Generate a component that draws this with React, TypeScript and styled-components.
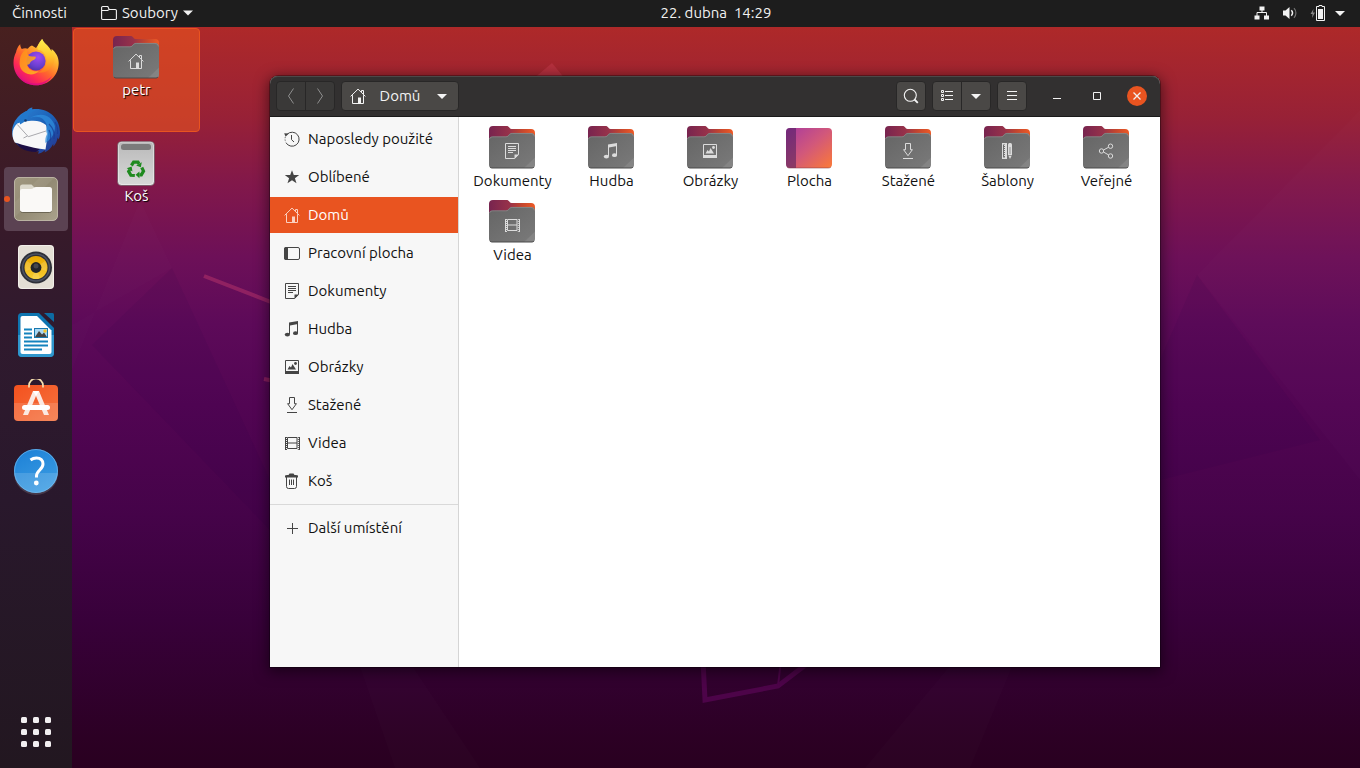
import React from "react";
import styled, { createGlobalStyle, css } from "styled-components";

const GlobalStyle = createGlobalStyle`
  *, *::before, *::after { box-sizing: border-box; }
  html, body { margin: 0; height: 100%; }
  body {
    font-family: Ubuntu, "Noto Sans", "Open Sans", sans-serif;
    font-size: 15px;
    line-height: 18px;
    color: #111;
    background: #2c0022;
  }
  button {
    font: inherit;
    color: inherit;
    border: 0;
    padding: 0;
    background: none;
    cursor: default;
  }
  svg { display: block; flex: none; }
`;

/* ---------- symbolic icons, 16 x 16 ---------- */

type SymbolName =
  | "recent" | "star" | "home" | "desktop" | "document" | "music" | "picture"
  | "download" | "video" | "trash" | "plus" | "template" | "share" | "folder"
  | "back" | "forward" | "caret" | "search" | "list" | "menu" | "minimize"
  | "maximize" | "close" | "network" | "volume" | "battery";

const symbols: Record<SymbolName, React.ReactNode> = {
  recent: (
    <g fill="none" stroke="currentColor">
      <path d="M3.2 3.2A7 7 0 1 1 2.2 12" />
      <path d="M1.3 6.2A7 7 0 0 0 1.9 11.4" strokeDasharray="1 1.4" />
      <path d="M7.5 4v4.6L10 11" />
      <path d="M0.2 2.2 4.8 2.4 1.6 5.8z" fill="currentColor" stroke="none" />
    </g>
  ),
  star: <path d="M8 1.2 9.8 6h5.4l-4.3 3.2 1.6 5L8 11.2l-4.5 3 1.6-5L.8 6h5.4z" fill="currentColor" />,
  home: (
    <>
      <path d="M.6 8.4 8 1.1l7.4 7.3M2.5 7.2v8.3h5.8M13.5 7.2v8.3h-3M11.5 4V2.5h2V6" fill="none" stroke="currentColor" />
      <path d="M8 9.5h3V16H8z" fill="currentColor" />
    </>
  ),
  desktop: (
    <>
      <rect x=".5" y="2.5" width="15" height="12" rx="1.5" fill="none" stroke="currentColor" />
      <path d="M0 4a2 2 0 0 1 2-2h2v13H2a2 2 0 0 1-2-2z" fill="currentColor" />
    </>
  ),
  document: (
    <>
      <path d="M1.5.5h13v11l-4 4h-9z" fill="none" stroke="currentColor" />
      <path d="M4 3.500h8M4 5.500h8M4 7.500h8M4 9.500h5" stroke="currentColor" />
      <path d="M15 11.500 10.500 16v-4.500z" fill="currentColor" />
    </>
  ),
  music: (
    <>
      <path d="M5 1.600 14 0v3L6 4.400V13H5z" fill="currentColor" />
      <path d="M13 1h1v11h-1z" fill="currentColor" />
      <ellipse cx="3.400" cy="13.600" rx="2.600" ry="1.900" fill="currentColor" />
      <ellipse cx="11.500" cy="12.200" rx="2.500" ry="1.900" fill="currentColor" />
    </>
  ),
  picture: (
    <>
      <path d="M1.500 1.500h13v12h-13z" fill="none" stroke="currentColor" />
      <path d="M1 12h14v3H1zM3.500 10.500 5.500 7 7 8.500 8.500 5l3.500 5.500z" fill="currentColor" />
      <circle cx="11.500" cy="4.500" r="1.400" fill="currentColor" />
    </>
  ),
  download: (
    <path d="M5.500.5h5v6.200h1.900L8 12.700 3.600 6.700h1.900zM3 15.500h10" fill="none" stroke="currentColor" />
  ),
  video: (
    <>
      <path d="M3.500 2.500h9.500v11H3.500zM3.500 8H13" fill="none" stroke="currentColor" />
      <path d="M1.500 2v13M15.500 2v13" stroke="currentColor" />
      <path d="M2.500 2v13M14.300 2v13" stroke="currentColor" strokeDasharray="1 1" />
    </>
  ),
  trash: (
    <>
      <path d="M2.500 4v9.500a2 2 0 0 0 2 2h6a2 2 0 0 0 2-2V4M5.500 6.500V12M7.500 6.500V12M9.500 6.500V12" fill="none" stroke="currentColor" />
      <path d="M1 2.500 3 2h1.500L5.500.5h4L10.500 2H12l2 .5V4.500H1z" fill="currentColor" />
    </>
  ),
  plus: <path d="M8.500 3v11M3 8.500h11" stroke="currentColor" />,
  template: (
    <>
      <path d="M3 0h5v16H3zm1 1.500v13h2v-13z" fill="currentColor" fillRule="evenodd" />
      <path d="M5 2.500h2M5 4.500h2M5 6.500h2M5 8.500h2M5 10.500h2M5 12.500h2" stroke="currentColor" />
      <path d="M9 1.500A1.500 1.500 0 0 1 10.500 0h1A1.500 1.500 0 0 1 13 1.500V12l-2 4-2-4z" fill="currentColor" />
      <path d="M11 4v7M9 12.500h4" stroke="#777" strokeWidth=".7" />
    </>
  ),
  share: (
    <g fill="none" stroke="currentColor">
      <circle cx="3.500" cy="8" r="2.200" />
      <circle cx="12.500" cy="3.200" r="2.200" />
      <circle cx="12.500" cy="13" r="2.200" />
      <path d="M5.500 7 10.500 4.300M5.500 9l5 2.900" />
    </g>
  ),
  folder: (
    <path d="M.6 4.700V2.600a1.100 1.100 0 0 1 1.100-1.100h5.100L8.200 4.500h6.100a1.100 1.100 0 0 1 1.100 1.100v7.800a1.100 1.100 0 0 1-1.100 1.100H1.700a1.100 1.100 0 0 1-1.100-1.100V4.700M1 5.500h5.600l1.600-1" fill="none" stroke="currentColor" strokeWidth="1.100" />
  ),
  back: <path d="M10.500.5 5.500 8l5 7.500" fill="none" stroke="currentColor" />,
  forward: <path d="M5.500.5l5 7.500-5 7.500" fill="none" stroke="currentColor" />,
  caret: <path d="M3 6h10l-5 5z" fill="currentColor" />,
  search: (
    <>
      <circle cx="7.300" cy="7.300" r="6" fill="none" stroke="currentColor" strokeWidth="1.100" />
      <path d="m11.500 11.500 3.300 3.300" stroke="currentColor" strokeWidth="1.800" />
    </>
  ),
  list: (
    <>
      <path d="M2.500 2.500h2v2h-2zM2.500 6.500h2v2h-2zM2.500 10.500h2v2h-2z" fill="none" stroke="currentColor" />
      <path d="M6 3.500h8M6 7.500h8M6 11.500h8" stroke="currentColor" />
    </>
  ),
  menu: <path d="M3 3.500h10M3 7.500h10M3 11.500h10" stroke="currentColor" />,
  minimize: <path d="M4 10.500h8" stroke="currentColor" />,
  maximize: <path d="M4.500 4.500h7v7h-7z" fill="none" stroke="currentColor" />,
  close: <path d="m4.500 4.500 7 7m0-7-7 7" stroke="currentColor" strokeWidth="1.300" />,
  network: (
    <>
      <path d="M5.500 1.500h5v4h-5zM.5 10.500h5v4h-5zM10 10.500h5v4h-5z" fill="currentColor" />
      <path d="M8 5v3M3 11V7.500h9.500V11" fill="none" stroke="currentColor" />
    </>
  ),
  volume: (
    <>
      <path d="M1 5.500h2.500L7.500 2v12l-4-3.500H1z" fill="currentColor" />
      <path d="M9.300 5.300a4 4 0 0 1 0 5.400" fill="none" stroke="currentColor" strokeWidth="1.500" />
      <path d="M12 3.200a7 7 0 0 1 0 9.600" fill="none" stroke="currentColor" opacity=".4" strokeWidth="1.200" />
    </>
  ),
  battery: (
    <>
      <path d="M3.500 4 .5 9h2L2 13l3-5.500H3z" fill="currentColor" opacity=".5" />
      <path d="M9 .5h3v1h2.500v14H6.500v-14H9z" fill="none" stroke="currentColor" />
      <path d="M8 4h5v10H8z" fill="currentColor" />
    </>
  ),
};

const Symbol = ({ name }: { name: SymbolName }) => (
  <svg width="16" height="16" viewBox="0 0 16 16" aria-hidden="true">
    {symbols[name]}
  </svg>
);

/* ---------- full colour icons ---------- */

const Defs = styled.svg`
  position: absolute;
  width: 0;
  height: 0;
`;

const Gradients = () => (
  <Defs aria-hidden="true">
    <defs>
      <linearGradient id="folderBack" x1="0" y1="0" x2="1" y2="0">
        <stop offset="0" stopColor="#77244f" />
        <stop offset=".45" stopColor="#98324a" />
        <stop offset=".7" stopColor="#c2452f" />
        <stop offset="1" stopColor="#ee5a25" />
      </linearGradient>
      <linearGradient id="folderFront" x1="0" y1="0" x2="1" y2="1">
        <stop offset="0" stopColor="#656565" />
        <stop offset="1" stopColor="#7a7a7a" />
      </linearGradient>
      <linearGradient id="desktopIcon" x1="0" y1="0" x2="1" y2="1">
        <stop offset="0" stopColor="#a83aa0" />
        <stop offset=".5" stopColor="#d2587a" />
        <stop offset="1" stopColor="#fb7a37" />
      </linearGradient>
      <linearGradient id="binBody" x1="0" y1="0" x2="0" y2="1">
        <stop offset="0" stopColor="#b9b9b9" />
        <stop offset="1" stopColor="#d8d8d8" />
      </linearGradient>
      <linearGradient id="foxBody" x1=".9" y1=".1" x2=".25" y2=".95">
        <stop offset="0" stopColor="#fff44f" />
        <stop offset=".3" stopColor="#ffb02e" />
        <stop offset=".55" stopColor="#ff6a2c" />
        <stop offset=".8" stopColor="#ff2a55" />
        <stop offset="1" stopColor="#e0107e" />
      </linearGradient>
      <linearGradient id="foxFlame" x1=".5" y1="0" x2=".5" y2="1">
        <stop offset="0" stopColor="#fff44f" />
        <stop offset=".5" stopColor="#ffc92c" />
        <stop offset="1" stopColor="#ff7a1f" />
      </linearGradient>
      <linearGradient id="foxHead" x1="0" y1="0" x2="1" y2="1">
        <stop offset="0" stopColor="#ff8a1c" />
        <stop offset="1" stopColor="#ffb520" />
      </linearGradient>
      <radialGradient id="foxGlobe" cx=".6" cy=".3" r=".8">
        <stop offset="0" stopColor="#a04af0" />
        <stop offset=".6" stopColor="#6a3fd0" />
        <stop offset="1" stopColor="#4a2fa0" />
      </radialGradient>
      <linearGradient id="birdBody" x1="0" y1="0" x2="1" y2="1">
        <stop offset="0" stopColor="#2f86d8" />
        <stop offset=".5" stopColor="#1c62b8" />
        <stop offset="1" stopColor="#25308a" />
      </linearGradient>
      <linearGradient id="filesApp" x1="0" y1="0" x2="1" y2="1">
        <stop offset="0" stopColor="#a09880" />
        <stop offset=".5" stopColor="#938b74" />
        <stop offset="1" stopColor="#aaa28c" />
      </linearGradient>
      <linearGradient id="speakerRing" x1="0" y1="0" x2="0" y2="1">
        <stop offset="0" stopColor="#e8a800" />
        <stop offset="1" stopColor="#f7cc30" />
      </linearGradient>
      <linearGradient id="storeBag" x1="0" y1="0" x2="1" y2="1">
        <stop offset="0" stopColor="#f4511e" />
        <stop offset="1" stopColor="#f47340" />
      </linearGradient>
      <linearGradient id="helpDisc" x1="0" y1="0" x2=".5" y2="1">
        <stop offset="0" stopColor="#1b7fd6" />
        <stop offset="1" stopColor="#3a9be2" />
      </linearGradient>
    </defs>
  </Defs>
);

const FolderIcon = ({ symbol }: { symbol: SymbolName }) => (
  <svg width="49" height="48" viewBox="0 0 49 48" color="#dcdcdc" aria-hidden="true">
    <path d="M1 6a4 4 0 0 1 4-4h13.500c1.500 0 2 .6 3 1.700C22.300 4.700 23 5 24.500 5H43a4 4 0 0 1 4 4v8H1z" fill="url(#folderBack)" />
    <path d="M1 16a3.500 3.500 0 0 1 3.500-3.500h13c2 0 2.600-.8 3.600-2 .8-1 1.600-1.500 3.400-1.500H43a4 4 0 0 1 4 4v28a3 3 0 0 1-3 3H4a3 3 0 0 1-3-3z" fill="url(#folderFront)" />
    <path d="M1.500 15a3 3 0 0 1 3-2.200h13c2 0 2.800-.8 3.800-2 .8-1 1.600-1.400 3.200-1.400H43a3.500 3.500 0 0 1 3.500 3" fill="none" stroke="#a2a2a2" strokeOpacity=".7" strokeWidth=".7" />
    <path d="M47 33.500V41a3 3 0 0 1-3 3h-8z" fill="#fff" opacity=".09" />
    <path d="M2 43c.5.7 1.200 1 2 1h40c.8 0 1.500-.3 2-1" fill="none" stroke="#4a4a4a" />
    <svg x="16" y="19" width="16" height="16" viewBox="0 0 16 16">{symbols[symbol]}</svg>
  </svg>
);

const DesktopFolderIcon = () => (
  <svg width="49" height="48" viewBox="0 0 49 48" aria-hidden="true">
    <rect x="1" y="4" width="46" height="40" rx="4" fill="url(#desktopIcon)" />
    <path d="M5 4h6v40H5a4 4 0 0 1-4-4V8a4 4 0 0 1 4-4z" fill="#3e1858" opacity=".5" />
    <path d="M2 43c.6.600 1.500 1 3 1h38c1.500 0 2.400-.4 3-1" fill="none" stroke="#7a3040" strokeOpacity=".5" />
  </svg>
);

const RecycleArm = ({ turn }: { turn: number }) => (
  <g transform={`rotate(${turn})`}>
    <path d="M-4.600-4-2.400-7.300H2l1 1.700" fill="none" stroke="#1f8a1f" strokeWidth="3.200" />
    <path d="M5.800-7.300 4.800-2.300.1-4z" fill="#1f8a1f" />
  </g>
);

const TrashBinIcon = () => (
  <svg width="49" height="48" viewBox="0 0 49 48" aria-hidden="true">
    <rect x="5.500" y="1.500" width="37" height="44" rx="4" fill="url(#binBody)" stroke="#5c4a52" strokeOpacity=".6" />
    <rect x="6.500" y="2" width="35" height="42.500" rx="3.500" fill="none" stroke="#fff" strokeOpacity=".4" />
    <rect x="9" y="4" width="30" height="6" rx="2.500" fill="#7b7b7b" />
    <g transform="translate(24 29.500)">
      <RecycleArm turn={0} />
      <RecycleArm turn={120} />
      <RecycleArm turn={240} />
    </g>
  </svg>
);

const FirefoxIcon = () => (
  <svg width="48" height="48" viewBox="0 0 48 48" aria-hidden="true">
    <path d="M1.500 24c0-4 .8-7.500 2.600-11 .3-2.300 1.600-5.500 4.100-7.800.1 2 .6 3.400 1.600 4.800 2-1 4.200-1 6-.3 1-1.400 2.500-2.600 4.200-3.200L24 9l6-9c1.500 3.500 5 5.500 7.500 9 .8 1.200 1.200 2.200 1.700 3.500.3-.8.400-1.500.4-2.500C44 13.500 46.700 18 46.700 24c0 12.500-10 22.300-22.600 22.300S1.500 36.500 1.500 24z" fill="url(#foxBody)" />
    <circle cx="24" cy="22" r="9.600" fill="url(#foxGlobe)" />
    <path d="M30.300 0c-3.500 3-5.200 7.500-4.800 10.500 5 .8 8.300 4.500 9 9.500.7 6-3.500 12.500-9.500 13.500 10 1.500 17-5 17.500-13.500C42.800 11 33 8 30.300 0z" fill="url(#foxFlame)" opacity=".85" />
    <path d="M15.800 9.700c-1.400 2.800-.6 5.800 1.200 7.300 2 .6 4 .4 6.800.7.400 2.400-2.500 3.200-4.500 4.500-1.500 1-1 3.500-4.300 3.500 1.500 5 6 7.300 12 6.300-3 3-7 4-11 3C9 33 6.500 27 8 20.500 8.300 16 11 11.500 15.800 9.700z" fill="url(#foxHead)" opacity=".9" />
    <path d="M4 33c4 8 12 12 20.500 11.500 6-.4 11.500-3 15.500-7.500-3.500 6-9 9.300-16 9.300C15 46.300 7 41 4 33z" fill="#d90a86" opacity=".75" />
  </svg>
);

const ThunderbirdIcon = () => (
  <svg width="48" height="48" viewBox="0 0 48 48" aria-hidden="true">
    <path d="M15 4c1-2 3.500-3.500 5.500-3.500L20 2.200C36 0 48 11 48 25c0 4-.7 6-1.500 7.500l-.8-2c-.7 4-2 6.500-4.200 9l-.3-2.500c-2 4-5 7-8.700 8.500l.8-2.500c-2.300 2-4.500 3.200-7.300 3.700l1-2.500C11 45 0 37 0 25 0 19 2.500 13 7.500 8.500 9.500 6.500 12 5 15 4z" fill="url(#birdBody)" />
    <path d="M2 31c3 9 10 14 22 14l4-3L8 32z" fill="#1c0e45" />
    <path d="M.5 27c0-4 1.700-8 4.700-10.500 4-1.700 8-2.500 11.800-2.500 7-1 13 .5 17 4l2 8-2.500 16.500C24 41.500 12 38.500 2.800 35.500 1.300 33 .5 30 .5 27z" fill="#f7f7f8" />
    <path d="m5.300 17.500 11 12.200 17.700-5.700M15.500 29l-4 2" fill="none" stroke="#a9a9ae" />
    <path d="M9 9c3-5 9-7.500 15-5.500-5 1-8 4-9 8.500-1.500 2-4 4-7 5.500C7.500 14 7.700 11.500 9 9z" fill="#2277cb" />
    <path d="M18 11c8-3 15 0 17 8-1 2-1.200 5 0 8-1.500 3-2 6-1.600 9 6-3.500 10-10 9.500-17C40 9 30 4 18 11z" fill="#2f8ddd" opacity=".75" />
    <path d="M37 17c4 4 6 9 5 15m-5-9c1.800 3 2.200 7 1 11M43 15c2.400 4 3 8 2.500 12" stroke="#173a94" strokeWidth="1.200" fill="none" opacity=".7" />
    <circle cx="13.500" cy="13.500" r="1.300" fill="#123a70" />
  </svg>
);

const FilesAppIcon = () => (
  <svg width="48" height="48" viewBox="0 0 48 48" aria-hidden="true">
    <rect x="2.500" y="2.500" width="43" height="43" rx="4.500" fill="url(#filesApp)" stroke="#cbc5b2" strokeOpacity=".8" />
    <path d="M3 27 27 3h15L3 42z" fill="#fff" opacity=".06" />
    <path d="M8 12a2.500 2.500 0 0 1 2.500-2.500h9L23 13h2v6H8z" fill="#dcd9cc" />
    <path d="M8 16a2 2 0 0 1 2-2h9c2 0 3-2 5-2h13.500a2.500 2.500 0 0 1 2.500 2.500v20a2.500 2.500 0 0 1-2.500 2.500h-27A2.500 2.500 0 0 1 8 34.500z" fill="#faf9f7" />
    <path d="M8.500 36.500c.5.800 1 1 2 1h27c1 0 1.500-.2 2-1" fill="none" stroke="#6c6654" />
  </svg>
);

const SpeakerIcon = () => (
  <svg width="48" height="48" viewBox="0 0 48 48" aria-hidden="true">
    <rect x="6" y="2" width="36" height="44" rx="4" fill="#e4dfd5" />
    <rect x="6.500" y="2.500" width="35" height="43" rx="3.500" fill="none" stroke="#fff" strokeOpacity=".5" />
    <circle cx="24" cy="24.500" r="16" fill="#2e3038" />
    <circle cx="24" cy="24.500" r="13.500" fill="none" stroke="#4d5363" strokeWidth="1.500" />
    <circle cx="24" cy="24.500" r="11.500" fill="url(#speakerRing)" />
    <path d="M24 24.500 15 18a11 11 0 0 0-1 10zM24 24.500l9-6.500a11 11 0 0 1 1 10zM24 24.500 20 35a11 11 0 0 0 8 0z" fill="#fff" opacity=".15" />
    <circle cx="24" cy="24.500" r="5.400" fill="#22242a" />
    <circle cx="24" cy="23" r="2.500" fill="#45474e" />
  </svg>
);

const WriterIcon = () => (
  <svg width="48" height="48" viewBox="0 0 48 48" aria-hidden="true">
    <path d="M9.500 2H27l15 15v25a4 4 0 0 1-4 4H10a4 4 0 0 1-4-4V5.500A3.500 3.500 0 0 1 9.500 2z" fill="#0e75b0" />
    <path d="M6 24h36v18a4 4 0 0 1-4 4H10a4 4 0 0 1-4-4z" fill="#2f97cd" />
    <path d="M10.500 5H25l14.500 14.500v21.500a2 2 0 0 1-2 2h-27a2 2 0 0 1-2-2V7a2 2 0 0 1 2-2z" fill="#fff" />
    <path d="M32 2h8.500A1.500 1.500 0 0 1 42 3.500V11z" fill="#0d6ba2" />
    <path d="M12 18.500h8M12 22.500h8M12 26.500h8M12 30.500h24M12 34.500h24M12 38.500h18" stroke="#1483be" strokeWidth="1.800" />
    <path d="M22 17h14v10H22z" fill="#1878ae" />
    <path d="M23 18h12v8H23z" fill="#a9d8f3" />
    <path d="m23 26 4-6 3 3.500 2-2 3 4.500z" fill="#444" />
    <circle cx="33" cy="20" r="1.700" fill="#f5c52c" />
  </svg>
);

const StoreIcon = () => (
  <svg width="48" height="48" viewBox="0 0 48 48" aria-hidden="true">
    <rect x="2" y="6" width="44" height="36" rx="4" fill="url(#storeBag)" />
    <path d="M2 24h44v14a4 4 0 0 1-4 4H6a4 4 0 0 1-4-4z" fill="#fff" opacity=".14" />
    <path d="M17 8.500v-2a7 7 0 0 1 14 0v2" fill="none" stroke="#f6dfae" strokeWidth="1.700" />
    <path d="M21 12h6l10 24h-5l-8-19-8 19h-5z" fill="#fbe9e2" />
    <path d="M21 12h6l-3 5z" fill="#fff" />
    <rect x="10" y="26" width="28" height="5" rx="2.500" fill="#fff" />
  </svg>
);

const HelpIcon = () => (
  <svg width="48" height="48" viewBox="0 0 48 48" aria-hidden="true">
    <circle cx="24" cy="24" r="22" fill="url(#helpDisc)" />
    <path d="M2 26a22 22 0 0 0 44 0z" fill="#fff" opacity=".14" />
    <circle cx="24" cy="24" r="21.500" fill="none" stroke="#7dc0f0" strokeOpacity=".6" />
    <path d="M18.500 13c2-1.500 4-2 6-2 4.200 0 6.500 2.500 6.500 6 0 5.500-6.500 6.500-6.500 12v1.500" fill="none" stroke="#fff" strokeWidth="3" />
    <circle cx="24.300" cy="36" r="2.400" fill="#fff" />
  </svg>
);

const AppGridIcon = () => (
  <svg width="48" height="48" viewBox="0 0 48 48" fill="#f2eff1" aria-hidden="true">
    {[9, 21, 33].map((y) => [9, 21, 33].map((x) => <rect key={`${x}-${y}`} x={x} y={y} width="6" height="6" rx="1.500" />))}
  </svg>
);

/* ---------- shell ---------- */

const Screen = styled.div`
  display: grid;
  grid-template-rows: 27px 1fr;
  min-height: 100vh;
`;

const TopBar = styled.header`
  display: grid;
  grid-template-columns: 72px 1fr auto 1fr;
  align-items: center;
  padding-bottom: 1px;
  color: #f2f2f2;
  background: #1d1d1d;
`;

const BarButton = styled.button<{ $inset?: number }>`
  display: flex;
  align-items: center;
  gap: 5px;
  padding: 0 ${(p) => p.$inset ?? 0}px;
  white-space: pre;
`;

const Status = styled.button`
  display: flex;
  align-items: center;
  justify-self: end;
  gap: 12px;
  padding-right: 12px;
`;

const StatusTail = styled.span`
  display: flex;
  gap: 6px;
`;

const Body = styled.div`
  display: grid;
  grid-template-columns: 72px 1fr;
`;

const Dock = styled.nav`
  display: flex;
  flex-direction: column;
  align-items: center;
  gap: 4px;
  padding: 4px 0;
  background: linear-gradient(#48201f, #3a1a28 22%, #301a2e 40%, #29182c 64%, #221720);
`;

const DockItem = styled.button<{ $active?: boolean; $last?: boolean }>`
  position: relative;
  display: grid;
  place-items: center;
  width: 64px;
  height: 64px;
  border-radius: 4px;
  ${(p) => p.$last && css`margin-top: auto;`}
  ${(p) =>
    p.$active &&
    css`
      background: #5b4252;
      &::before {
        content: "";
        position: absolute;
        left: 0;
        top: 29px;
        width: 6px;
        height: 6px;
        border-radius: 50%;
        background: #e95420;
      }
    `}
`;

const Desktop = styled.main`
  position: relative;
  isolation: isolate;
  padding: 1px;
  background: linear-gradient(
    #ae2929, #982136 12%, #82184a 21%, #6d1058 31%, #5d0a59 40%, #520553 51%,
    #450349 66%, #38013a 80%, #2c0024 96%, #290020
  );
`;

const Wallpaper = styled.svg`
  position: absolute;
  inset: 0;
  z-index: -1;
  width: 100%;
  height: 100%;
`;

const DesktopIcons = styled.div`
  display: flex;
  flex-direction: column;
  gap: 2px;
  width: 127px;
`;

const DesktopItem = styled.button<{ $selected?: boolean }>`
  display: flex;
  flex-direction: column;
  align-items: center;
  height: 104px;
  padding-top: 5px;
  line-height: 16px;
  color: #fff;
  text-shadow: 1px 1px 1px #000;
  border: 1px solid ${(p) => (p.$selected ? "#e95420" : "transparent")};
  border-radius: 4px;
  background: ${(p) => (p.$selected ? "rgba(233, 84, 32, 0.6)" : "none")};
`;

/* ---------- file manager window ---------- */

const Window = styled.section`
  position: absolute;
  inset: 49px 200px 101px 198px;
  display: flex;
  flex-direction: column;
  border-radius: 8px 8px 0 0;
  background: #fff;
  box-shadow: 0 0 0 1px rgba(0, 0, 0, 0.3), 0 3px 14px 2px rgba(0, 0, 0, 0.5);
`;

const HeaderBar = styled.header`
  display: flex;
  align-items: center;
  gap: 6px;
  height: 41px;
  padding: 0 6px;
  color: #f2f2f2;
  border-bottom: 1px solid #1a1a1a;
  border-radius: 8px 8px 0 0;
  background: #323030;
  box-shadow: inset 0 1px #4b4848;
`;

const ToolButton = styled.button<{ $muted?: boolean; $wide?: boolean }>`
  display: flex;
  align-items: center;
  justify-content: center;
  gap: 14px;
  width: ${(p) => (p.$wide ? "118px" : "30px")};
  height: 30px;
  color: ${(p) => (p.$muted ? "#8e8e8e" : "#f4f4f4")};
  border: 1px solid #282727;
  border-radius: 4px;
  background: ${(p) => (p.$muted ? "#3a3938" : "#4a4846")};
`;

const Joined = styled.div`
  display: flex;
  ${ToolButton}:first-child { border-radius: 4px 0 0 4px; }
  ${ToolButton}:last-child { margin-left: -1px; border-radius: 0 4px 4px 0; }
`;

const WindowControls = styled.div`
  display: flex;
  gap: 20px;
  padding: 0 7px 0 14px;
`;

const WindowButton = styled.button<{ $accent?: boolean }>`
  display: grid;
  place-items: center;
  width: 20px;
  height: 20px;
  border-radius: 50%;
  background: ${(p) => (p.$accent ? "#e95420" : "none")};
`;

const Spacer = styled.div`
  flex: 1;
`;

const Content = styled.div`
  display: flex;
  flex: 1;
  min-height: 0;
`;

const Sidebar = styled.nav`
  display: flex;
  flex-direction: column;
  gap: 2px;
  width: 189px;
  padding-top: 4px;
  border-right: 1px solid #d5d5d5;
  background: #f7f7f7;
`;

const Place = styled.a<{ $current?: boolean }>`
  display: flex;
  align-items: center;
  gap: 8px;
  height: 36px;
  padding-left: 14px;
  text-decoration: none;
  color: ${(p) => (p.$current ? "#fff" : "#111")};
  background: ${(p) => (p.$current ? "#e95420" : "none")};
  svg { color: ${(p) => (p.$current ? "#fbd0c0" : "#454545")}; }
`;

const Divider = styled.hr`
  width: 100%;
  height: 1px;
  margin: 3px 0;
  border: 0;
  background: #d9d9d9;
`;

const FileGrid = styled.div`
  display: grid;
  flex: 1;
  grid-template-columns: repeat(auto-fill, minmax(98px, 1fr));
  grid-auto-rows: 66px;
  row-gap: 8px;
  align-content: start;
  padding: 7px 4px;
`;

const FileItem = styled.button`
  display: flex;
  flex-direction: column;
  align-items: center;
`;

const places: { label: string; icon: SymbolName }[] = [
  { label: "Naposledy použité", icon: "recent" },
  { label: "Oblíbené", icon: "star" },
  { label: "Domů", icon: "home" },
  { label: "Pracovní plocha", icon: "desktop" },
  { label: "Dokumenty", icon: "document" },
  { label: "Hudba", icon: "music" },
  { label: "Obrázky", icon: "picture" },
  { label: "Stažené", icon: "download" },
  { label: "Videa", icon: "video" },
  { label: "Koš", icon: "trash" },
];

const files: { label: string; icon: SymbolName }[] = [
  { label: "Dokumenty", icon: "document" },
  { label: "Hudba", icon: "music" },
  { label: "Obrázky", icon: "picture" },
  { label: "Plocha", icon: "desktop" },
  { label: "Stažené", icon: "download" },
  { label: "Šablony", icon: "template" },
  { label: "Veřejné", icon: "share" },
  { label: "Videa", icon: "video" },
];

const dockApps = [
  { label: "Firefox", Icon: FirefoxIcon },
  { label: "Thunderbird", Icon: ThunderbirdIcon },
  { label: "Soubory", Icon: FilesAppIcon, active: true },
  { label: "Rhythmbox", Icon: SpeakerIcon },
  { label: "LibreOffice Writer", Icon: WriterIcon },
  { label: "Ubuntu Software", Icon: StoreIcon },
  { label: "Nápověda", Icon: HelpIcon },
];

const WallpaperArt = () => (
  <Wallpaper viewBox="72 27 1288 741" preserveAspectRatio="none" aria-hidden="true">
    <g fill="#fff" opacity=".012">
      <path d="M72 325 172 268 140 200 72 370z" />
      <path d="M1197 275 1360 110V480z" />
      <path d="M360 667h53l67 101h-85z" />
      <path d="M949 667h63l-42 101H865z" />
    </g>
    <g fill="#1a0040" opacity=".07">
      <path d="M92 345 172 268 270 480v50z" />
      <path d="M1197 275 1320 440 1160 480V360z" />
    </g>
    <path d="m204 276 72 28M264 379l10 2" fill="none" stroke="#c43a6c" strokeWidth="4" opacity=".45" />
    <path d="m532 80 20-17 14 17z" fill="#c43a4c" opacity=".5" />
    <path d="m703 660 2 40 73-14 34-26" fill="none" stroke="#4d0449" strokeWidth="5" />
    <path d="m781 660-3 26" stroke="#4d0449" strokeWidth="2" />
  </Wallpaper>
);

export default function App() {
  return (
    <Screen>
      <GlobalStyle />
      <Gradients />
      <TopBar>
        <BarButton $inset={12}>Činnosti</BarButton>
        <BarButton $inset={29}>
          <Symbol name="folder" />
          <span>Soubory</span>
          <svg width="10" height="6" viewBox="0 0 10 6" aria-hidden="true">
            <path d="M0 .5h10l-5 5z" fill="currentColor" />
          </svg>
        </BarButton>
        <BarButton>{"22. dubna  14:29"}</BarButton>
        <Status aria-label="Stav systému">
          <Symbol name="network" />
          <Symbol name="volume" />
          <StatusTail>
            <Symbol name="battery" />
            <Symbol name="caret" />
          </StatusTail>
        </Status>
      </TopBar>
      <Body>
        <Dock aria-label="Dok">
          {dockApps.map(({ label, Icon, active }) => (
            <DockItem key={label} aria-label={label} $active={active}>
              <Icon />
            </DockItem>
          ))}
          <DockItem aria-label="Zobrazit aplikace" $last>
            <AppGridIcon />
          </DockItem>
        </Dock>
        <Desktop>
          <WallpaperArt />
          <DesktopIcons>
            <DesktopItem $selected>
              <FolderIcon symbol="home" />
              petr
            </DesktopItem>
            <DesktopItem>
              <TrashBinIcon />
              Koš
            </DesktopItem>
          </DesktopIcons>
          <Window aria-label="Domů">
            <HeaderBar>
              <Joined>
                <ToolButton $muted aria-label="Zpět"><Symbol name="back" /></ToolButton>
                <ToolButton $muted aria-label="Vpřed"><Symbol name="forward" /></ToolButton>
              </Joined>
              <ToolButton $wide>
                <Symbol name="home" />
                <span>Domů</span>
                <Symbol name="caret" />
              </ToolButton>
              <Spacer />
              <ToolButton aria-label="Hledat"><Symbol name="search" /></ToolButton>
              <Joined>
                <ToolButton aria-label="Seznam"><Symbol name="list" /></ToolButton>
                <ToolButton aria-label="Volby zobrazení"><Symbol name="caret" /></ToolButton>
              </Joined>
              <ToolButton aria-label="Nabídka"><Symbol name="menu" /></ToolButton>
              <WindowControls>
                <WindowButton aria-label="Minimalizovat"><Symbol name="minimize" /></WindowButton>
                <WindowButton aria-label="Maximalizovat"><Symbol name="maximize" /></WindowButton>
                <WindowButton $accent aria-label="Zavřít"><Symbol name="close" /></WindowButton>
              </WindowControls>
            </HeaderBar>
            <Content>
              <Sidebar aria-label="Místa">
                {places.map(({ label, icon }) => (
                  <Place key={label} href="#" $current={icon === "home"}>
                    <Symbol name={icon} />
                    {label}
                  </Place>
                ))}
                <Divider />
                <Place href="#">
                  <Symbol name="plus" />
                  Další umístění
                </Place>
              </Sidebar>
              <FileGrid>
                {files.map(({ label, icon }) => (
                  <FileItem key={label}>
                    {icon === "desktop" ? <DesktopFolderIcon /> : <FolderIcon symbol={icon} />}
                    {label}
                  </FileItem>
                ))}
              </FileGrid>
            </Content>
          </Window>
        </Desktop>
      </Body>
    </Screen>
  );
}
